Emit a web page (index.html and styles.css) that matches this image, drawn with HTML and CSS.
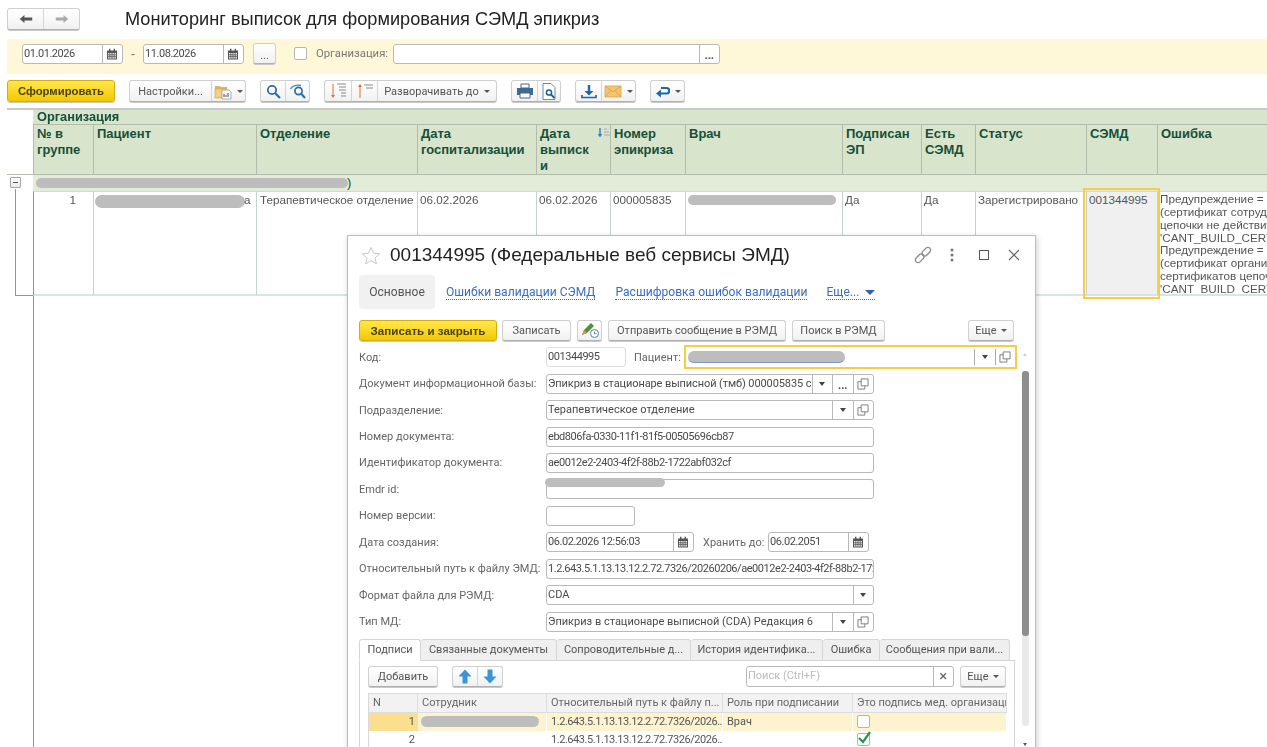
FILE: index.html
```html
<!DOCTYPE html>
<html lang="ru">
<head>
<meta charset="utf-8">
<title>Мониторинг выписок для формирования СЭМД эпикриз</title>
<link rel="stylesheet" href="styles.css">
</head>
<body>
<svg class="sprite" aria-hidden="true">
  <symbol id="cal" viewBox="0 0 12 12"><path d="M1 2.500h10v9H1z" fill="#555"/><path d="M3 .8h1.400v2.400H3zM7.600.8H9v2.400H7.600z" fill="#555"/><path d="M2 5h8v5.500H2z" fill="#eee"/><path d="M3.800 5v5.500M6 5v5.500M8.200 5v5.500M2 6.800h8M2 8.600h8" stroke="#555" stroke-width=".8"/></symbol>
  <symbol id="copy" viewBox="0 0 13 13"><path d="M4.500 1h7.500v7.500H4.500z" fill="#fff" stroke="#777"/><path d="M4.500 4H1v8h7.500V8.500" fill="none" stroke="#777"/></symbol>
</svg>

<header class="top">
  <div class="btn-group nav">
    <span class="btn-cell nav-cell"><svg width="14" height="10" viewBox="0 0 18 12"><path d="M1 6l6-5v3h10v4H7v3z" fill="#555"/></svg></span>
    <span class="btn-cell nav-cell"><svg width="14" height="10" viewBox="0 0 18 12"><path d="M17 6l-6-5v3H1v4h10v3z" fill="#aaa"/></svg></span>
  </div>
  <h1 class="title">Мониторинг выписок для формирования СЭМД эпикриз</h1>
</header>

<section class="filter">
  <div class="field w-date"><span class="val nums">01.01.2026</span><span class="cell"><svg class="ic12"><use href="#cal"/></svg></span></div>
  <span class="dash">-</span>
  <div class="field w-date"><span class="val nums">11.08.2026</span><span class="cell"><svg class="ic12"><use href="#cal"/></svg></span></div>
  <span class="btn dots">...</span>
  <span class="check"></span>
  <span class="flabel">Организация:</span>
  <div class="field w-org"><span class="val"></span><span class="cell dots-cell">...</span></div>
</section>

<nav class="toolbar">
  <span class="btn primary w-make">Сформировать</span>
  <div class="btn-group">
    <span class="btn-cell tx w-settings">Настройки...</span>
    <span class="btn-cell tx w-folder">
      <svg width="18" height="17" viewBox="0 0 18 17"><path d="M1 3h5l1 1h6v3H1z" fill="#e2b45c"/><path d="M1 6h12v9H1z" fill="#f0cf87" stroke="#d6a850" stroke-width=".7"/><path d="M8 7h7l2 2v7H8z" fill="#fff" stroke="#999" stroke-width=".8"/><path d="M10 14v-3" stroke="#d33" stroke-width="1.200"/><path d="M12 14v-2" stroke="#3a3" stroke-width="1.200"/><path d="M14 14v-4" stroke="#36c" stroke-width="1.200"/></svg>
      <i class="caret"></i>
    </span>
  </div>
  <div class="btn-group">
    <span class="btn-cell ic-cell"><svg width="15" height="15" viewBox="0 0 15 15"><circle cx="6" cy="6" r="4.200" fill="none" stroke="#2a6fa5" stroke-width="1.800"/><path d="M9 9l5 5" stroke="#2a6fa5" stroke-width="2.200"/></svg></span>
    <span class="btn-cell ic-cell"><svg width="18" height="15" viewBox="0 0 18 15"><path d="M1.500 5C3 1.500 8 .5 12 1.500" fill="none" stroke="#4a87b5" stroke-width="1.300"/><circle cx="9.500" cy="7" r="3.600" fill="none" stroke="#2a6fa5" stroke-width="1.700"/><path d="M12 9.500l4 4.500" stroke="#2a6fa5" stroke-width="2"/></svg></span>
  </div>
  <div class="btn-group">
    <span class="btn-cell sort-cell"><svg width="18" height="18" viewBox="0 0 18 18"><path d="M4 2v13" stroke="#e0703a"/><path d="M2 13l2 3 2-3z" fill="#e0703a"/><path d="M8 2h9M10 5h7M10 8h7M12 11h5M12 14h5" stroke="#888"/></svg></span>
    <span class="btn-cell sort-cell"><svg width="18" height="18" viewBox="0 0 18 18"><path d="M4 3v13" stroke="#e0703a"/><path d="M2 5l2-3 2 3z" fill="#e0703a"/><path d="M8 3h9M10 6h7" stroke="#888"/></svg></span>
    <span class="btn-cell tx w-expand">Разворачивать до <i class="caret"></i></span>
  </div>
  <div class="btn-group">
    <span class="btn-cell ic-cell print"><svg width="18" height="16" viewBox="0 0 18 16"><path d="M5 1h8v4H5z" fill="#fff" stroke="#41688c"/><path d="M1 5h16v7H1z" fill="#3f6b93"/><path d="M4 10h10v5H4z" fill="#fff" stroke="#41688c"/></svg></span>
    <span class="btn-cell ic-cell preview"><svg width="14" height="17" viewBox="0 0 14 17"><path d="M1 .5h8l4 4v12H1z" fill="#fff" stroke="#6f8aa0"/><circle cx="7" cy="9.500" r="2.600" fill="none" stroke="#1e5f94" stroke-width="1.500"/><path d="M9 11.500l3.500 3.500" stroke="#1e5f94" stroke-width="1.800"/></svg></span>
  </div>
  <div class="btn-group">
    <span class="btn-cell ic-cell dl"><svg width="16" height="15" viewBox="0 0 16 15"><path d="M8 1v7" stroke="#1f6aa5" stroke-width="2.400"/><path d="M3.500 7h9L8 11.500z" fill="#1f6aa5"/><path d="M1 11v2.500h14V11" fill="none" stroke="#1f6aa5" stroke-width="1.700"/></svg></span>
    <span class="btn-cell mail"><svg width="18" height="13" viewBox="0 0 18 13"><path d="M1 1h16v11H1z" fill="#f2c676" stroke="#dca645" stroke-width=".8"/><path d="M1 1l8 6 8-6M1 12l6-6.500M17 12l-6-6.500" fill="none" stroke="#d69c3a" stroke-width=".8"/></svg><i class="caret"></i></span>
  </div>
  <div class="btn-group">
    <span class="btn-cell back"><svg width="15" height="13" viewBox="0 0 15 13"><path d="M6 3h5.500a2.500 2.500 0 0 1 0 5.500H6" fill="none" stroke="#1f6aa5" stroke-width="2.200"/><path d="M6 4.500L1 8.500l5 4z" fill="#1f6aa5"/></svg><i class="caret"></i></span>
  </div>
</nav>

<main class="report">
  <div class="tree-head"></div>
  <div class="org-head">Организация</div>
  <div class="th">№ в группе</div>
  <div class="th">Пациент</div>
  <div class="th">Отделение</div>
  <div class="th">Дата госпитализации</div>
  <div class="th th-sort">Дата выписк и<svg class="sort-mark" width="13" height="10" viewBox="0 0 13 10"><path d="M3 0v7" stroke="#2a7fc0" stroke-width="1.400"/><path d="M.8 6h4.400L3 9.500z" fill="#2a7fc0"/><path d="M7 1h3M7 4h5M7 7h6" stroke="#aaa"/></svg></div>
  <div class="th">Номер эпикриза</div>
  <div class="th">Врач</div>
  <div class="th">Подписан ЭП</div>
  <div class="th">Есть СЭМД</div>
  <div class="th">Статус</div>
  <div class="th">СЭМД</div>
  <div class="th th-last">Ошибка</div>

  <div class="tree-box"><span class="minus"></span></div>
  <div class="group"><span class="redact redact-group"></span><span class="group-end">)</span></div>

  <div class="tree-line"></div>
  <div class="td num">1</div>
  <div class="td"><span class="redact redact-patient"></span><span class="tail">а</span></div>
  <div class="td td-dept">Терапевтическое отделение</div>
  <div class="td">06.02.2026</div>
  <div class="td">06.02.2026</div>
  <div class="td">000005835</div>
  <div class="td"><span class="redact redact-doctor"></span></div>
  <div class="td">Да</div>
  <div class="td">Да</div>
  <div class="td">Зарегистрировано</div>
  <div class="td selected">001344995</div>
  <div class="td td-last">
    <div>Предупреждение = 'Некорректный сертификат'</div>
    <div>(сертификат сотрудника</div>
    <div>цепочки не действителен</div>
    <div>'CANT_BUILD_CERT_CHAIN'</div>
    <div>Предупреждение = 'Некорректный сертификат'</div>
    <div>(сертификат организации</div>
    <div>сертификатов цепочки</div>
    <div>'CANT_BUILD_CERT_CHAIN'</div>
  </div>
  <div class="tail-col"></div>
</main>

<section class="window">
  <div class="win-head">
    <svg class="star" width="20" height="19" viewBox="0 0 20 19"><path d="M10 1.500l2.500 5.700 6.200.6-4.700 4.100 1.400 6-5.400-3.200-5.400 3.200 1.400-6L1.300 7.800l6.200-.6z" fill="#fff" stroke="#c8c8c8"/></svg>
    <h2 class="win-title">001344995 (Федеральные веб сервисы ЭМД)</h2>
    <div class="win-actions">
      <svg width="18" height="18" viewBox="0 0 18 18"><g fill="none" stroke="#8a8a8a" stroke-width="1.300"><rect x="-5" y="-2.750" width="10" height="5.500" rx="2.750" transform="translate(5.700 12.300) rotate(-45)"/><rect x="-5" y="-2.750" width="10" height="5.500" rx="2.750" transform="translate(12.300 5.700) rotate(-45)"/></g></svg>
      <svg class="more" width="6" height="14" viewBox="0 0 6 14"><circle cx="3" cy="2" r="1.500" fill="#777"/><circle cx="3" cy="7" r="1.500" fill="#777"/><circle cx="3" cy="12" r="1.500" fill="#777"/></svg>
      <svg class="max" width="10" height="10" viewBox="0 0 10 10"><rect x=".5" y=".5" width="9" height="9" fill="none" stroke="#555"/></svg>
      <svg class="close" width="12" height="12" viewBox="0 0 12 12"><path d="M1 1l10 10M11 1L1 11" stroke="#666" stroke-width="1.100"/></svg>
    </div>
  </div>

  <div class="win-tabs">
    <span class="wtab active">Основное</span>
    <a class="wtab link l1">Ошибки валидации СЭМД</a>
    <a class="wtab link l2">Расшифровка ошибок валидации</a>
    <a class="wtab link l3">Еще... <i class="caret blue"></i></a>
  </div>

  <div class="cmd">
    <span class="btn primary w-save">Записать и закрыть</span>
    <span class="btn w-write">Записать</span>
    <span class="btn w-pen"><svg width="20" height="18" viewBox="0 0 20 18"><path d="M2 14l2-5 7-7 3 3-7 7z" fill="#4f9136"/><path d="M2 14l2-5 3 3z" fill="#c89a60"/><circle cx="14.500" cy="12.500" r="4" fill="#fff" stroke="#5a7f9e"/><path d="M14.500 10.500v2.200h2" fill="none" stroke="#5a7f9e"/></svg></span>
    <span class="btn w-send">Отправить сообщение в РЭМД</span>
    <span class="btn w-find">Поиск в РЭМД</span>
    <span class="btn w-more">Еще <i class="caret"></i></span>
  </div>

  <div class="form">
    <div class="row">
      <label class="lbl">Код:</label>
      <div class="field soft w-code"><span class="val nums">001344995</span></div>
      <label class="lbl-inline pat">Пациент:</label>
      <div class="field focus w-pat"><span class="val"><span class="redact redact-pat"></span></span><span class="cell"><i class="caret dark"></i></span><span class="cell"><svg class="ic12"><use href="#copy"/></svg></span></div>
    </div>
    <div class="row">
      <label class="lbl">Документ информационной базы:</label>
      <div class="field w-full"><span class="val tight">Эпикриз в стационаре выписной (тмб) 000005835 с</span><span class="cell"><i class="caret dark"></i></span><span class="cell dots-cell">...</span><span class="cell"><svg class="ic12"><use href="#copy"/></svg></span></div>
    </div>
    <div class="row">
      <label class="lbl">Подразделение:</label>
      <div class="field w-full"><span class="val">Терапевтическое отделение</span><span class="cell"><i class="caret dark"></i></span><span class="cell"><svg class="ic12"><use href="#copy"/></svg></span></div>
    </div>
    <div class="row">
      <label class="lbl">Номер документа:</label>
      <div class="field w-full"><span class="val nums">ebd806fa-0330-11f1-81f5-00505696cb87</span></div>
    </div>
    <div class="row">
      <label class="lbl">Идентификатор документа:</label>
      <div class="field w-full"><span class="val nums">ae0012e2-2403-4f2f-88b2-1722abf032cf</span></div>
    </div>
    <div class="row">
      <label class="lbl">Emdr id:</label>
      <div class="field w-full"><span class="redact redact-emdr"></span></div>
    </div>
    <div class="row">
      <label class="lbl">Номер версии:</label>
      <div class="field w-ver"></div>
    </div>
    <div class="row">
      <label class="lbl">Дата создания:</label>
      <div class="field w-created"><span class="val nums">06.02.2026 12:56:03</span><span class="cell"><svg class="ic12"><use href="#cal"/></svg></span></div>
      <label class="lbl-inline keep">Хранить до:</label>
      <div class="field w-keep"><span class="val nums">06.02.2051</span><span class="cell"><svg class="ic12"><use href="#cal"/></svg></span></div>
    </div>
    <div class="row">
      <label class="lbl">Относительный путь к файлу ЭМД:</label>
      <div class="field w-full"><span class="val nums">1.2.643.5.1.13.13.12.2.72.7326/20260206/ae0012e2-2403-4f2f-88b2-1722abf032cf</span></div>
    </div>
    <div class="row">
      <label class="lbl">Формат файла для РЭМД:</label>
      <div class="field w-full"><span class="val">CDA</span><span class="cell"><i class="caret dark"></i></span></div>
    </div>
    <div class="row">
      <label class="lbl">Тип МД:</label>
      <div class="field w-full"><span class="val">Эпикриз в стационаре выписной (CDA) Редакция 6</span><span class="cell"><i class="caret dark"></i></span><span class="cell"><svg class="ic12"><use href="#copy"/></svg></span></div>
    </div>
  </div>

  <div class="tabs">
    <span class="tab on t1">Подписи</span>
    <span class="tab t2">Связанные документы</span>
    <span class="tab t3">Сопроводительные д...</span>
    <span class="tab t4">История идентифика...</span>
    <span class="tab t5">Ошибка</span>
    <span class="tab t6">Сообщения при вали...</span>
  </div>
  <div class="panel">
    <div class="panel-bar">
      <span class="btn w-add">Добавить</span>
      <div class="btn-group arrows">
        <span class="btn-cell arrow-cell"><svg width="14" height="15" viewBox="0 0 14 15"><path d="M7 .5l6.500 7H9.500v7h-5v-7H.5z" fill="#3a94d8"/></svg></span>
        <span class="btn-cell arrow-cell"><svg width="14" height="15" viewBox="0 0 14 15"><path d="M7 14.500l6.500-7H9.500v-7h-5v7H.5z" fill="#3a94d8"/></svg></span>
      </div>
      <div class="field w-search"><span class="val ph">Поиск (Ctrl+F)</span><span class="cell x">×</span></div>
      <span class="btn w-pmore">Еще <i class="caret"></i></span>
    </div>
    <div class="sub">
      <div class="sh">N</div><div class="sh">Сотрудник</div><div class="sh">Относительный путь к файлу п...</div><div class="sh">Роль при подписании</div><div class="sh">Это подпись мед. организации</div>
      <div class="sd sn cur">1</div><div class="sd hl"><span class="redact redact-emp"></span></div><div class="sd hl nums">1.2.643.5.1.13.13.12.2.72.7326/2026...</div><div class="sd hl">Врач</div><div class="sd hl"><span class="box"></span></div>
      <div class="sd sn">2</div><div class="sd"></div><div class="sd nums">1.2.643.5.1.13.13.12.2.72.7326/2026...</div><div class="sd"></div><div class="sd"><span class="box"><svg width="15" height="14" viewBox="0 0 15 14"><path d="M2 7l4 4 7-10" fill="none" stroke="#1f9a4a" stroke-width="2.200"/></svg></span></div>
    </div>
  </div>

  <div class="scroll">
    <i class="s-up"></i>
    <div class="s-track"><div class="s-thumb"></div></div>
    <i class="s-down"></i>
  </div>
</section>
</body>
</html>
```

FILE: styles.css
```css
* { box-sizing: border-box; }
html, body { margin: 0; height: 100%; }
body {
  width: 1267px; height: 747px; overflow: hidden; background: #fff; color: #4a4a4a;
  font: 12px "Liberation Sans", Arial, sans-serif; position: relative;
  filter: blur(.45px);
}
.sprite { position: absolute; width: 0; height: 0; }
.ic12 { width: 12px; height: 12px; }
.nums { letter-spacing: -.45px; }
.tight { letter-spacing: -.1px; }

/* header */
.top { display: flex; align-items: center; height: 39px; padding: 0 0 1px 7px; }
.nav { height: 24px; width: 73px; }
.nav-cell { flex: 1; }
.title { margin: 0 0 0 45px; font: 400 18.200px "Liberation Sans", sans-serif; color: #222; white-space: nowrap; }

/* buttons */
.btn, .btn-group {
  display: inline-flex; align-items: center; justify-content: center; height: 22px; white-space: nowrap;
  border: 1px solid #cfcfcf; border-bottom-color: #b0b0b0; border-radius: 3px; color: #555;
  background: linear-gradient(#fff, #f1f1f1); box-shadow: 0 1px 0 #c9c9c9;
  font: 11px Roboto, "Liberation Sans", sans-serif;
}
.btn-cell { display: flex; align-items: center; justify-content: center; height: 100%; border-left: 1px solid #d5d5d5; gap: 5px; }
.btn-cell:first-child { border-left: 0; }
.primary {
  background: linear-gradient(#ffe84d, #f3c800); border-color: #d3ad14; color: #4c4210; font: 700 11.600px "Liberation Sans", sans-serif;
}
.caret { display: inline-block; width: 0; height: 0; border: 3px solid transparent; border-top: 3px solid #555; border-bottom: 0; vertical-align: middle; }
.caret.dark { border-top-color: #444; border-width: 4px 3.500px 0; }
.caret.blue { border-top-color: #2d60b8; border-width: 5px 5px 0; border-bottom: 0; margin-left: 3px; }

/* filter */
.filter { display: flex; align-items: center; height: 35px; margin-left: 7px; padding: 0 0 6px 15px; background: #fef8d9; }
.field {
  display: flex; align-items: stretch; height: 20px; background: #fff; border: 1px solid #b9b9b9; border-radius: 3px;
  font: 11px Roboto, "Liberation Sans", sans-serif; color: #4a4a4a; flex: none; position: relative;
}
.val { flex: 1; min-width: 0; padding: 0 1px; line-height: 18px; overflow: hidden; white-space: nowrap; }
.cell { flex: none; width: 20.500px; border-left: 1px solid #b9b9b9; display: flex; align-items: center; justify-content: center; }
.dots-cell { align-items: flex-end; line-height: 14px; color: #444; font-weight: 700; }
.w-date { width: 101px; }
.dash { width: 20px; text-align: center; color: #666; }
.dots { width: 23px; margin-left: 9px; height: 21px; font-size: 11px; align-items: flex-end; line-height: 15px; }
.check { width: 13px; height: 13px; margin-left: 18px; border: 1px solid #b5b5b5; border-radius: 2px; background: #fff; }
.flabel { margin-left: 9px; width: 77px; color: #777; font: 11.300px Roboto, sans-serif; }
.w-org { width: 327px; }

/* toolbar */
.toolbar { display: flex; align-items: center; height: 22px; margin: 6px 0 6px 7px; }
.toolbar .btn-group { margin-left: 14px; }
.w-make { width: 108px; font-size: 11.300px; }
.tx { font: 11px Roboto, sans-serif; }
.w-settings { width: 81px; }
.w-folder { width: 34px; }
.ic-cell { width: 24px; }
.sort-cell { width: 26px; }
.w-expand { width: 119px; }
.print { width: 25px; } .preview { width: 23px; }
.dl { width: 25px; } .mail { width: 34px; }
.back { width: 33px; }

/* report grid */
.report {
  display: grid; margin-left: 7px; width: 1260px; border-top: 2px solid #c9c9c9;
  grid-template-columns: 26px 60px 163px 161px 119px 74px 75px 157px 79px 54px 111px 71px 110px;
  grid-template-rows: 15px 50px 16px 105px 451px;
}
.tree-head { grid-row: 1 / 3; border-bottom: 1px solid #b5bdae; }
.org-head { grid-column: 2 / -1; background: #d8e4cc; border-bottom: 1px solid #b3bcab; color: #14503a; font-weight: 700; font-size: 12.800px; line-height: 14px; padding-left: 4px; }
.th {
  position: relative; background: #d8e4cc; border-left: 1px solid #b3bcab; border-bottom: 1px solid #b3bcab; color: #14503a;
  font-weight: 700; font-size: 13px; line-height: 16px; padding: 1px 2px 0 3px; overflow-wrap: anywhere;
}
.th:first-of-type { border-left: 0; padding-left: 4px; }
.th-sort { padding-right: 18px; }
.sort-mark { position: absolute; right: 0; top: 3px; }
.tree-box { position: relative; }
.minus { position: absolute; left: 3px; top: 2px; width: 11px; height: 11px; background: linear-gradient(#fff, #e9e9e9); border: 1px solid #a5a5a5; border-radius: 1px; }
.minus::after { content: ""; position: absolute; left: 2px; right: 2px; top: 4px; height: 1px; background: #555; }
.group { grid-column: 2 / -1; background: #e3ecd9; position: relative; display: flex; align-items: center; }
.group-end { position: absolute; left: 314px; top: 0; color: #14503a; font-size: 13px; }
.redact { display: inline-block; background: #bdbdbd; border-radius: 7px; }
.redact-group { width: 312px; height: 10px; margin-left: 3px; }
.tree-line { position: relative; }
.tree-line::before { content: ""; position: absolute; left: 8px; top: -2px; bottom: 0; width: 1px; background: #8d9690; }
.tree-line::after { content: ""; position: absolute; left: 8px; right: 0; bottom: 0; height: 1px; background: #8d9690; }
.td { position: relative; border-left: 1px solid #c3d3cd; border-top: 1px solid #cfdcd4; border-bottom: 2px solid #dbe5e0; padding: 1px 2px; line-height: 13px; font-size: 11.700px; color: #555; white-space: nowrap; overflow: hidden; }
.td.num { text-align: right; padding-right: 17px; border-left: 1px solid #8d9690; }
.td-dept { padding-left: 3px; }
.redact-patient { position: absolute; left: 1px; top: 3px; width: 150px; height: 13px; }
.tail { position: absolute; left: 150px; top: 1px; }
.redact-doctor { position: absolute; left: 2px; top: 3px; width: 148px; height: 10px; }
.selected { background: #f0f0f0; outline: 2px solid #f8cd46; outline-offset: 1px; overflow: visible; z-index: 1; }
.td-last div { line-height: 12.850px; }
.tail-col { border-left: 1px solid #8d9690; grid-column: 2; }

/* window */
.window {
  position: absolute; left: 347px; top: 235px; width: 689px; height: 520px; background: #fff; border: 1px solid #bdbdbd;
  box-shadow: 1px 2px 6px rgba(0,0,0,.2); font: 11px Roboto, sans-serif; padding-left: 11px;
}
.win-head { display: flex; align-items: center; height: 38px; }
.star { flex: none; margin-left: 2px; }
.win-title { margin: 0 0 0 9px; font: 400 19px "Liberation Sans", sans-serif; color: #222; white-space: nowrap; }
.win-actions { margin-left: auto; display: flex; align-items: center; padding-right: 15px; }
.more { margin-left: 17px; }
.max { margin-left: 24px; }
.close { margin-left: 19px; }
.win-tabs { display: flex; align-items: center; height: 34px; margin-top: 1px; font-size: 12.100px; }
.wtab { height: 34px; line-height: 34px; white-space: nowrap; }
.wtab.active { width: 76px; text-align: center; background: #f1f1f1; border-radius: 4px; color: #555; }
.link { color: #3a6dc0; height: 15px; line-height: 14px; border-bottom: 1px dotted #3a6dc0; }
.l1 { margin-left: 11px; } .l2 { margin-left: 20px; } .l3 { margin-left: 19px; }
.cmd { display: flex; align-items: center; height: 22px; margin-top: 10px; }
.cmd .btn { margin-left: 6px; height: 21px; }
.cmd .primary { margin-left: 0; }
.cmd .w-write { margin-left: 5px; }
.w-save { width: 138px; }
.w-write { width: 69px; }
.w-pen { width: 25px; }
.w-send { width: 178px; }
.w-find { width: 93px; }
.cmd .w-more { width: 46px; margin-left: 83px; gap: 4px; }

.form { margin-top: 3px; }
.row { display: flex; align-items: center; height: 26.450px; }
.lbl { width: 187px; flex: none; color: #666; white-space: nowrap; }
.lbl-inline { flex: none; color: #666; white-space: nowrap; }
.soft { border-color: #ddd; }
.w-code { width: 80px; }
.pat { margin-left: 8px; width: 50px; }
.focus { width: 333px; height: 24px; border: 2px solid #f8cd46; border-radius: 0; }
.focus .val { line-height: 20px; }
.focus .cell { border-left-color: #aaa; margin: 2px 0; }
.redact-pat { width: 157px; height: 12px; margin: 4px 0 0 1px; border-bottom: 1px solid #7e95cf; display: block; }
.w-full { width: 328px; }
.redact-emdr { position: absolute; left: -2px; top: -2px; width: 120px; height: 9px; }
.w-ver { width: 89px; }
.w-created { width: 148px; }
.keep { margin-left: 9px; width: 65px; }
.w-keep { width: 101px; }

.tabs { display: flex; height: 22px; margin-top: 4px; position: relative; z-index: 1; }
.tab { height: 22px; line-height: 19px; border: 1px solid #d5d5d5; border-left: 0; background: #efefef; text-align: center; color: #555; border-radius: 3px 3px 0 0; white-space: nowrap; }
.tab.on { background: #fff; border-left: 1px solid #d5d5d5; border-bottom-color: #fff; }
.t1 { width: 62px; } .t2 { width: 136px; } .t3 { width: 134px; } .t4 { width: 132px; } .t5 { width: 57px; } .t6 { width: 130px; }
.panel { width: 656px; height: 120px; margin-top: -1px; border: 1px solid #d5d5d5; border-bottom: 0; padding: 5px 8px 0; }
.panel-bar { display: flex; align-items: center; height: 21px; }
.w-add { width: 70px; height: 21px; }
.arrows { height: 21px; width: 51px; margin-left: 14px; }
.arrow-cell { flex: 1; }
.w-search { width: 208px; margin-left: 243px; height: 21px; }
.ph { color: #bbb; }
.x { font-size: 15px; color: #666; }
.w-pmore { width: 46px; height: 21px; margin-left: 6px; gap: 4px; }
.sub { display: grid; margin-top: 6px; width: 638px; grid-template-columns: 49px 129px 176px 130px 154px; grid-template-rows: 20px 18px 18px; border-left: 1px solid #d8d8d8; }
.sh { background: #f2f2f2; border-right: 1px solid #ddd; border-top: 1px solid #ddd; border-bottom: 1px solid #ddd; padding: 0 4px; line-height: 18px; color: #666; white-space: nowrap; overflow: hidden; }
.sd { padding: 0 4px; line-height: 18px; color: #555; white-space: nowrap; overflow: hidden; position: relative; }
.sn { text-align: right; padding-right: 3px; }
.hl { background: #fdf3cf; border-right: 1px solid #fff; }
.cur { background: #fbdf8e; }
.redact-emp { position: absolute; left: 3px; top: 3px; width: 118px; height: 11px; }
.box { display: block; width: 13px; height: 13px; margin-top: 2px; border: 1px solid #b5b5b5; border-radius: 2px; background: #fff; position: relative; }
.box svg { position: absolute; left: -1px; top: -3px; }

.scroll { position: absolute; left: 674px; top: 117px; width: 7px; height: 393px; }
.s-up, .s-down { position: absolute; left: 1px; width: 0; height: 0; border: 2.500px solid transparent; }
.s-up { top: 0; border-top: 0; border-bottom: 3px solid #d0d0d0; }
.s-down { bottom: 0; border-bottom: 0; border-top: 3px solid #555; }
.s-track { position: absolute; top: 18px; left: 0; width: 7px; height: 355px; background: #e9e9e9; border-radius: 3px; }
.s-thumb { height: 265px; background: #8e8e8e; border-radius: 3px; }
```
